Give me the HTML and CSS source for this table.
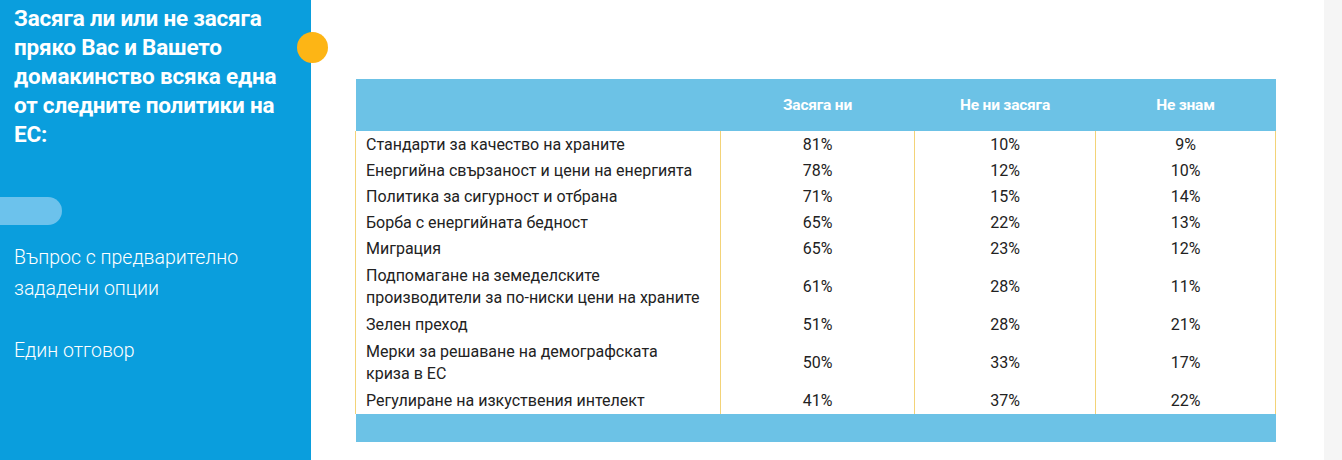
FILE: index.html
```html
<!DOCTYPE html>
<html lang="bg">
<head>
<meta charset="utf-8">
<link rel="stylesheet" href="styles.css">
</head>
<body>
<div class="page">
  <aside class="side">
    <h1 class="title"><span class="ln">Засяга ли или не засяга</span><span class="ln">пряко Вас и Вашето</span><span class="ln">домакинство всяка една</span><span class="ln">от следните политики на</span><span class="ln">ЕС:</span></h1>
    <div class="pill"></div>
    <p class="note">Въпрос с предварително зададени опции</p>
    <p class="note">Един отговор</p>
    <span class="dot"></span>
  </aside>
  <main class="main">
    <table class="grid">
      <thead>
        <tr><th class="lab"></th><th>Засяга ни</th><th>Не ни засяга</th><th>Не знам</th></tr>
      </thead>
      <tbody>
        <tr class="first"><td class="lab">Стандарти за качество на храните</td><td>81%</td><td>10%</td><td>9%</td></tr>
        <tr><td class="lab">Енергийна свързаност и цени на енергията</td><td>78%</td><td>12%</td><td>10%</td></tr>
        <tr><td class="lab">Политика за сигурност и отбрана</td><td>71%</td><td>15%</td><td>14%</td></tr>
        <tr><td class="lab">Борба с енергийната бедност</td><td>65%</td><td>22%</td><td>13%</td></tr>
        <tr><td class="lab">Миграция</td><td>65%</td><td>23%</td><td>12%</td></tr>
        <tr class="two"><td class="lab">Подпомагане на земеделските<br>производители за по-ниски цени на храните</td><td>61%</td><td>28%</td><td>11%</td></tr>
        <tr><td class="lab">Зелен преход</td><td>51%</td><td>28%</td><td>21%</td></tr>
        <tr class="two"><td class="lab">Мерки за решаване на демографската<br>криза в ЕС</td><td>50%</td><td>33%</td><td>17%</td></tr>
        <tr><td class="lab">Регулиране на изкуствения интелект</td><td>41%</td><td>37%</td><td>22%</td></tr>
      </tbody>
      <tfoot>
        <tr><td></td><td></td><td></td><td></td></tr>
      </tfoot>
    </table>
  </main>
  <div class="edge"></div>
</div>
</body>
</html>
```
FILE: styles.css
```css
* { box-sizing: border-box; }
html, body { margin: 0; padding: 0; }
body { background: #fff; font-family: Roboto, "Noto Sans", sans-serif; }
.page { display: flex; height: 460px; width: 1342px; }
.side {
  position: relative;
  width: 311px;
  flex: none;
  background: #0a9edd;
  color: #fff;
  padding: 4px 0 0 0;
}
.title {
  margin: 0;
  padding: 0 0 0 14px;
  font-size: 22.5px;
  line-height: 29px;
  font-weight: 700;
  letter-spacing: -0.2px;
}
.ln { display: block; white-space: nowrap; }
.pill {
  margin-top: 48px;
  width: 62px;
  height: 28px;
  background: #6cc2ec;
  border-radius: 0 14px 14px 0;
}
.note {
  margin: 0;
  padding: 0 20px 0 14px;
  font-size: 19.5px;
  line-height: 31px;
  font-weight: 300;
}
.pill + .note { margin-top: 17px; }
.note + .note { margin-top: 31px; }
.dot {
  position: absolute;
  left: 297px;
  top: 32px;
  width: 31px;
  height: 31px;
  border-radius: 50%;
  background: #fdb515;
}
.main { flex: 1; padding: 79px 0 0 44px; }
.edge { width: 18px; flex: none; background: #f5f5f5; }
.grid {
  border-collapse: collapse;
  width: 920px;
  table-layout: fixed;
  font-size: 16px;
  color: #222;
}
.grid th, .grid td { padding: 2px 0; text-align: center; }
.grid th:nth-child(1), .grid td:nth-child(1) { width: 365px; }
.grid th:nth-child(2), .grid td:nth-child(2) { width: 194px; }
.grid th:nth-child(3), .grid td:nth-child(3) { width: 181px; }
.grid th:nth-child(4), .grid td:nth-child(4) { width: 180px; }
.grid thead th {
  background: #6cc2e6;
  color: #fff;
  height: 52px;
  font-size: 15.5px;
  font-weight: 700;
  letter-spacing: -0.2px;
}
.grid tbody td {
  line-height: 22px;
  border-left: 1.5px solid #f3d378;
  border-right: 1.5px solid #f3d378;
}
.grid tbody tr.first td { padding-top: 3px; }
.grid tbody tr.two td { padding-top: 3px; padding-bottom: 3px; }
.grid tbody td.lab { text-align: left; padding-left: 10px; }
.grid tfoot td { background: #6cc2e6; height: 28px; padding: 0; }
```
